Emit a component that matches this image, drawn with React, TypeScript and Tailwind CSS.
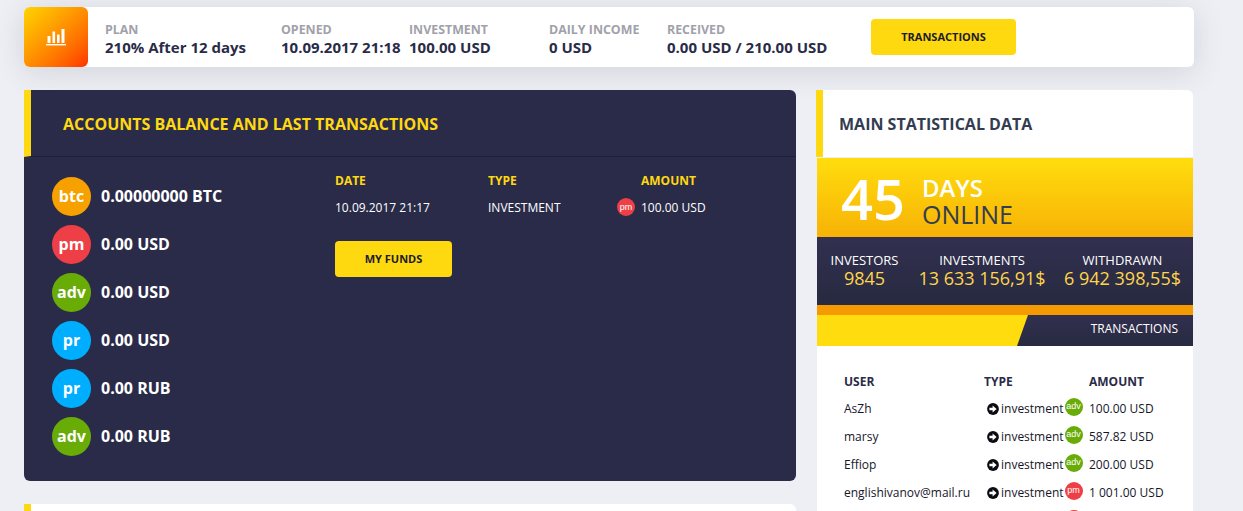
type Stat = { label: string; value: string; width: string };

const stats: Stat[] = [
    { label: 'PLAN', value: '210% After 12 days', width: 'w-[176px]' },
    { label: 'OPENED', value: '10.09.2017 21:18', width: 'w-[128px]' },
    { label: 'INVESTMENT', value: '100.00 USD', width: 'w-[140px]' },
    { label: 'DAILY INCOME', value: '0 USD', width: 'w-[118px]' },
    { label: 'RECEIVED', value: '0.00 USD / 210.00 USD', width: 'w-[204px]' },
];

type Balance = { code: string; color: string; value: string };

const balances: Balance[] = [
    { code: 'btc', color: 'bg-[#f7a100]', value: '0.00000000 BTC' },
    { code: 'pm', color: 'bg-[#ef3f46]', value: '0.00 USD' },
    { code: 'adv', color: 'bg-[#69ab07]', value: '0.00 USD' },
    { code: 'pr', color: 'bg-[#00aeff]', value: '0.00 USD' },
    { code: 'pr', color: 'bg-[#00aeff]', value: '0.00 RUB' },
    { code: 'adv', color: 'bg-[#69ab07]', value: '0.00 RUB' },
];

const transactions = [
    { user: 'AsZh', code: 'adv', color: 'bg-[#69ab07]', amount: '100.00 USD' },
    { user: 'marsy', code: 'adv', color: 'bg-[#69ab07]', amount: '587.82 USD' },
    { user: 'Effiop', code: 'adv', color: 'bg-[#69ab07]', amount: '200.00 USD' },
    { user: 'englishivanov@mail.ru', code: 'pm', color: 'bg-[#ef3f46]', amount: '1 001.00 USD' },
    { user: 'marsy', code: 'pm', color: 'bg-[#ef3f46]', amount: '300.00 USD' },
];

const totals = [
    { label: 'INVESTORS', value: '9845', width: 'w-[95px]' },
    { label: 'INVESTMENTS', value: '13 633 156,91$', width: 'w-[140px]' },
    { label: 'WITHDRAWN', value: '6 942 398,55$', width: 'w-[141px]' },
];

function ArrowDot() {
    return (
        <svg viewBox="0 0 12 12" className="h-[12px] w-[12px] shrink-0">
            <circle cx="6" cy="6" r="5.9" fill="#0b0b12" />
            <path d="M2.4 4.8h3.2V2.6L9.6 6 5.6 9.4V7.2H2.4z" fill="#fff" />
        </svg>
    );
}

export default function App() {
    return (
        <div className="h-[511px] w-[1243px] overflow-hidden bg-[#eeeff4] pl-[24px] pt-[7px] font-['Open_Sans',sans-serif]">
            <div className="flex h-[60px] w-[1170px] items-center rounded-md bg-white shadow-[0_5px_30px_rgba(60,60,90,0.15)]">
                <div className="flex h-[60px] w-[64px] shrink-0 items-center justify-center rounded-md bg-gradient-to-br from-[#ffd400] to-[#ff2e00]">
                    <svg viewBox="0 0 20 18" className="h-[18px] w-[20px]" fill="#fff">
                        <rect x="1.5" y="8" width="3" height="7" />
                        <rect x="6.5" y="3.5" width="2.6" height="11.5" />
                        <rect x="11" y="6.5" width="2.6" height="8.5" />
                        <rect x="15.5" y="1" width="3" height="14" />
                        <rect x="0" y="16" width="20" height="1.4" />
                    </svg>
                </div>
                <div className="ml-[17px] flex pt-[6px]">
                    {stats.map((stat) => (
                        <div key={stat.label} className={`${stat.width} shrink-0 whitespace-nowrap`}>
                            <div className="text-[12.4px] font-bold leading-[14px] text-[#a1a1aa]">{stat.label}</div>
                            <div className="text-[15px] font-bold leading-[20px] text-[#2a2b47]">{stat.value}</div>
                        </div>
                    ))}
                </div>
                <button type="button" className="h-[36px] w-[145px] rounded-sm bg-[#ffd90f] text-[11px] font-bold text-[#1c1c28]">
                    TRANSACTIONS
                </button>
            </div>

            <div className="mt-[23px] flex items-start gap-[20px]">
                <div className="w-[772px] shrink-0">
                    <div className="h-[391px] rounded-md rounded-tl-none bg-[#2a2b49]">
                        <div className="flex h-[67px] items-center border-b border-[#1f1f3a] border-l-[7px] border-l-[#ffd90f] pl-[32px] pt-[2px]">
                            <h2 className="text-[16px] font-bold text-[#ffd90f]">ACCOUNTS BALANCE AND LAST TRANSACTIONS</h2>
                        </div>
                        <div className="flex pl-[28px] pt-[20px]">
                            <div className="flex w-[283px] shrink-0 flex-col gap-[9px]">
                                {balances.map((item, i) => (
                                    <div key={i} className="flex items-center gap-[10px]">
                                        <span className={`${item.color} flex h-[39px] w-[39px] items-center justify-center rounded-full pb-[2px] text-[16px] font-bold text-white`}>
                                            {item.code}
                                        </span>
                                        <span className="mb-[2px] text-[16px] font-bold text-white">{item.value}</span>
                                    </div>
                                ))}
                            </div>
                            <div className="-mt-[4px] w-[400px]">
                                <div className="grid grid-cols-[153px_153px_1fr] text-[12px] font-bold leading-[16px] text-[#ffd90f]">
                                    <span>DATE</span>
                                    <span>TYPE</span>
                                    <span>AMOUNT</span>
                                </div>
                                <div className="mt-[10px] grid grid-cols-[153px_153px_1fr] items-center text-[12px] leading-[18px] text-white">
                                    <span>10.09.2017 21:17</span>
                                    <span>INVESTMENT</span>
                                    <span className="relative">
                                        <span className="absolute left-[-24px] top-[-1px] flex h-[18px] w-[18px] items-center justify-center rounded-full bg-[#ef3f46] font-['Liberation_Sans',sans-serif] text-[9px] text-white">
                                            pm
                                        </span>
                                        100.00 USD
                                    </span>
                                </div>
                                <button type="button" className="mt-[24px] h-[36px] w-[117px] rounded-sm bg-[#ffd90f] text-[11px] font-bold text-[#1c1c28]">
                                    MY FUNDS
                                </button>
                            </div>
                        </div>
                    </div>
                    <div className="mt-[23px] h-[60px] rounded-md rounded-tl-none border-l-[7px] border-l-[#ffd90f] bg-white" />
                </div>

                <div className="w-[377px] shrink-0">
                    <div className="flex h-[67px] items-center rounded-tr-md border-l-[7px] border-l-[#ffd90f] bg-white pl-[16px]">
                        <h2 className="text-[16px] font-bold text-[#333c50]">MAIN STATISTICAL DATA</h2>
                    </div>
                    <div className="ml-px mt-px w-[376px] bg-white">
                        <div className="flex h-[79px] items-center bg-gradient-to-b from-[#ffdd0d] to-[#f7b206] pl-[24px]">
                            <span className="w-[81px] text-[56px] font-semibold leading-none text-white">45</span>
                            <div className="pt-[6px] leading-[26px]">
                                <div className="text-[24px] font-semibold text-white">DAYS</div>
                                <div className="text-[25px] text-[#333c50]">ONLINE</div>
                            </div>
                        </div>
                        <div className="flex h-[68px] bg-gradient-to-b from-[#322f50] to-[#272a40] pt-[15px]">
                            {totals.map((total) => (
                                <div key={total.label} className={`${total.width} shrink-0 whitespace-nowrap text-center`}>
                                    <div className="text-[13px] leading-[16px] text-white">{total.label}</div>
                                    <div className="text-[18px] leading-[21px] text-[#ffd54a]">{total.value}</div>
                                </div>
                            ))}
                        </div>
                        <div className="h-[10px] bg-[#f59a00]" />
                        <div className="h-[31px] bg-[#ffdc0e]">
                            <div className="flex h-full items-center justify-end bg-gradient-to-b from-[#322f50] to-[#272a40] pb-[4px] pr-[15px] text-[12px] text-white [clip-path:polygon(211px_0,100%_0,100%_100%,200px_100%)]">
                                TRANSACTIONS
                            </div>
                        </div>
                        <div className="pl-[27px] pt-[28px]">
                            <div className="grid grid-cols-[140px_105px_1fr] text-[12px] font-bold leading-[16px] text-[#2b2b49]">
                                <span>USER</span>
                                <span>TYPE</span>
                                <span>AMOUNT</span>
                            </div>
                            <div className="mt-[5px]">
                                {transactions.map((row, i) => (
                                    <div key={i} className="grid h-[28px] grid-cols-[140px_105px_1fr] items-center whitespace-nowrap text-[12px] text-[#16162a]">
                                        <span>{row.user}</span>
                                        <span className="flex items-center pl-[3px]">
                                            <ArrowDot />
                                            <span className="ml-[2px]">investment</span>
                                            <span className={`${row.color} ml-px mt-[-4px] flex h-[18px] w-[18px] shrink-0 items-center justify-center rounded-full font-['Liberation_Sans',sans-serif] text-[9px] text-white`}>
                                                {row.code}
                                            </span>
                                        </span>
                                        <span>{row.amount}</span>
                                    </div>
                                ))}
                            </div>
                        </div>
                    </div>
                </div>
            </div>
        </div>
    );
}
